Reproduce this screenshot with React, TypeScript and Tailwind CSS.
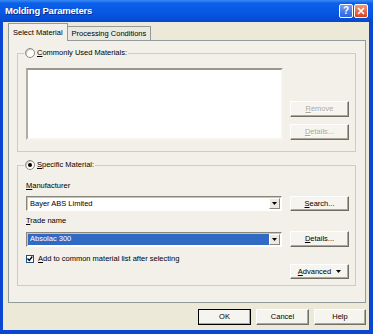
import React from "react"

const btn =
  "flex items-center justify-center bg-[#f5f4ef] border border-t-[#ffffff] border-l-[#ffffff] border-b-[#716f64] border-r-[#716f64] shadow-[inset_-1px_-1px_0_#aca899] text-[7.5px] leading-none"

function Btn({
  children,
  disabled,
  def,
  size = "w-[59px] h-[16px]",
}: {
  children: React.ReactNode
  disabled?: boolean
  def?: boolean
  size?: string
}) {
  return (
    <div
      className={
        btn +
        " " +
        size +
        (disabled ? " text-[#aca899] [text-shadow:1px_1px_0_#ffffff]" : " text-black") +
        (def ? " outline outline-1 outline-[#000000] -outline-offset-1" : "")
      }
    >
      {children}
    </div>
  )
}

function Radio({ checked }: { checked?: boolean }) {
  return (
    <span className="w-[10px] h-[10px] rounded-full bg-white border border-[#8a8a80] shadow-[inset_1px_1px_0_#c9c7ba] flex items-center justify-center">
      {checked && <span className="w-[4px] h-[4px] rounded-full bg-black" />}
    </span>
  )
}

function Combo({ text, selected }: { text: string; selected?: boolean }) {
  return (
    <div className="w-[256px] h-[15px] flex items-stretch bg-white border border-t-[#8a877a] border-l-[#8a877a] border-b-[#ffffff] border-r-[#ffffff] shadow-[inset_1px_1px_0_#c8c5b5]">
      <div className={"flex-1 flex items-center pl-[2px] ml-[1px] my-[1px] " + (selected ? "bg-[#316ac5] text-white" : "text-black")}>
        {text}
      </div>
      <div className="w-[11px] my-[1px] mr-[1px] bg-[#eceadf] border border-t-white border-l-white border-b-[#8a877a] border-r-[#8a877a] flex items-center justify-center">
        <svg width="5" height="3" viewBox="0 0 5 3">
          <path d="M0 0h5L2.5 3z" fill="#000" />
        </svg>
      </div>
    </div>
  )
}

export default function App() {
  return (
    <div className="w-[373px] h-[334px] flex flex-col bg-[#0a46d2] font-['Liberation_Sans',Arial,sans-serif] text-[7.5px] text-black select-none overflow-hidden">
      {/* Title bar */}
      <div className="h-[22px] flex items-center pl-[5px] pr-[5px] bg-[linear-gradient(#3b8bf5_0%,#0b5fe8_15%,#0757e2_60%,#0449cf_100%)]">
        <span className="flex-1 font-bold text-white text-[9.5px] tracking-[-0.2px] [text-shadow:1px_1px_0_#0a2c8a] pt-[1px]">
          Molding Parameters
        </span>
        <div className="flex gap-[1px]">
          <div className="w-[14px] h-[14px] rounded-[2px] border border-white bg-[linear-gradient(#6f9ff5,#2b62e0)] flex items-center justify-center text-white font-bold text-[10px] leading-none">
            ?
          </div>
          <div className="w-[14px] h-[14px] rounded-[2px] border border-white bg-[linear-gradient(#f09a7c,#d9431c)] flex items-center justify-center">
            <svg width="8" height="8" viewBox="0 0 8 8">
              <path d="M1 1l6 6M7 1l-6 6" stroke="#fff" strokeWidth="1.6" />
            </svg>
          </div>
        </div>
      </div>

      {/* Body */}
      <div className="flex-1 ml-[3px] mr-[4px] mb-[4px] bg-[#ece9d8] flex flex-col pl-[5px] pr-[3px] pt-[1px] pb-[5px]">
        {/* Tabs */}
        <div className="h-[17px] flex items-end relative z-10">
          <div className="h-[18px] -mb-[1px] px-[4px] flex items-center bg-[#f2f0e8] border border-b-0 border-[#919b9c]">
            Select Material
          </div>
          <div className="h-[14px] px-[4px] flex items-center bg-[#ebe9df] border border-l-0 border-b-0 border-[#919b9c]">
            Processing Conditions
          </div>
        </div>

        {/* Panel */}
        <div className="h-[263px] bg-[#f2f0e8] border border-[#919b9c] pl-[8px] pr-[9px] pt-[7px]">
          <fieldset className="border border-[#d0cdbe] pl-[8px] pr-[6px] pt-[10px] pb-[11px]">
            <legend className="-ml-[2px] px-[1px] flex items-center gap-[2px] h-[10px]">
              <Radio />
              <span>
                <u>C</u>ommonly Used Materials:
              </span>
            </legend>
            <div className="flex items-end gap-[7px]">
              <div className="w-[257px] h-[72px] bg-white border-2 border-t-[#9a978a] border-l-[#b0ad9f] border-b-[#f5f4ef] border-r-[#f5f4ef]" />
              <div className="flex flex-col gap-[7px]">
                <Btn disabled>
                  <span>
                    <u>R</u>emove
                  </span>
                </Btn>
                <Btn disabled>
                  <span>
                    <u>D</u>etails...
                  </span>
                </Btn>
              </div>
            </div>
          </fieldset>

          <fieldset className="mt-[8px] border border-[#d0cdbe] pl-[8px] pr-[6px] pt-[11px] pb-[6px]">
            <legend className="-ml-[2px] px-[1px] flex items-center gap-[2px] h-[10px]">
              <Radio checked />
              <span>
                <u>S</u>pecific Material:
              </span>
            </legend>
            <div className="flex flex-col">
              <div className="h-[9px] flex items-center">
                <span>
                  <u>M</u>anufacturer
                </span>
              </div>
              <div className="mt-[6px] flex items-center gap-[8px]">
                <Combo text="Bayer ABS Limited" />
                <Btn size="w-[59px] h-[15px]">
                  <span>
                    <u>S</u>earch...
                  </span>
                </Btn>
              </div>
              <div className="mt-[5px] h-[9px] flex items-center">
                <span>
                  <u>T</u>rade name
                </span>
              </div>
              <div className="mt-[6px] flex items-center gap-[8px]">
                <Combo text="Absolac 300" selected />
                <Btn>
                  <span>
                    <u>D</u>etails...
                  </span>
                </Btn>
              </div>
              <div className="mt-[7px] h-[9px] flex items-center gap-[4px]">
                <span className="w-[8px] h-[8px] bg-white border border-[#1c5180] flex items-center justify-center">
                  <svg width="6" height="6" viewBox="0 0 6 6">
                    <path d="M0.5 2.5l1.8 2 3-4" stroke="#000" strokeWidth="1.3" fill="none" />
                  </svg>
                </span>
                <span>
                  <u>A</u>dd to common material list after selecting
                </span>
              </div>
              <div className="flex justify-end mt-[1px]">
                <Btn size="w-[59px] h-[15px]">
                  <span className="flex items-center gap-[5px]">
                    <span>
                      <u>A</u>dvanced
                    </span>
                    <svg width="5" height="3" viewBox="0 0 5 3">
                      <path d="M0 0h5L2.5 3z" fill="#000" />
                    </svg>
                  </span>
                </Btn>
              </div>
            </div>
          </fieldset>
        </div>

        {/* Dialog buttons */}
        <div className="mt-[6px] flex justify-end gap-[5px]">
          <Btn def size="w-[53px] h-[16px]">
            OK
          </Btn>
          <Btn size="w-[53px] h-[16px]">Cancel</Btn>
          <Btn size="w-[52px] h-[16px]">Help</Btn>
        </div>
      </div>
    </div>
  )
}
